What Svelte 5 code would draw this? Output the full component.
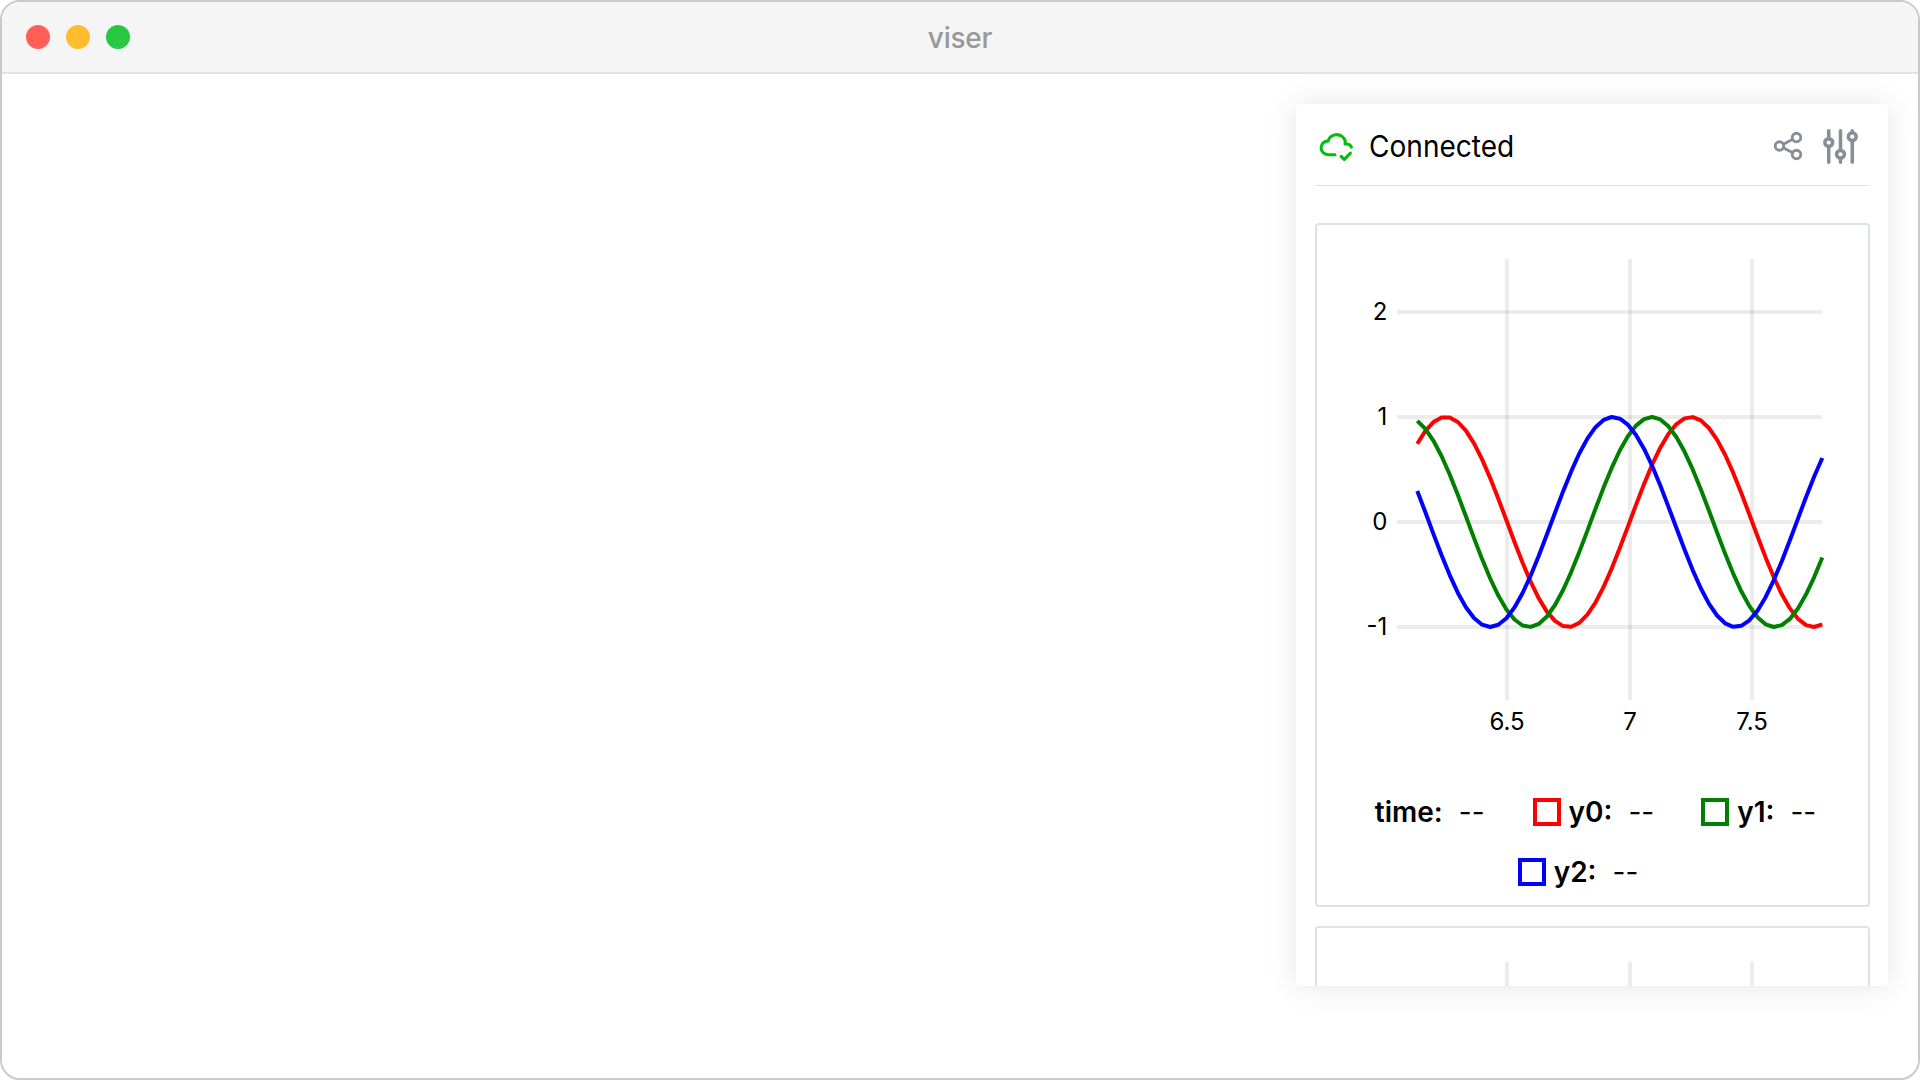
<script>
  // Chart geometry, in SVG user units (card interior is 551 wide)
  const xOf = (t) => 312.6 + (t - 7) * 245.2;
  const yOf = (v) => 297 - v * 105;

  const yTicks = [2, 1, 0, -1];
  const xTicks = [
    { label: '6.5', x: 190 },
    { label: '7', x: 313 },
    { label: '7.5', x: 435 }
  ];

  const series = [
    { name: 'y0', color: '#ff0000', phase: 0 },
    { name: 'y1', color: '#008000', phase: 1 },
    { name: 'y2', color: '#0000ff', phase: 2 }
  ];

  const start = 6.134;
  const step = 0.03304;
  const count = 50;

  function trace(phase) {
    const pts = [];
    for (let i = 0; i <= count; i++) {
      const t = start + i * step;
      const v = Math.sin(2 * Math.PI * t + phase);
      pts.push(`${xOf(t).toFixed(1)},${yOf(v).toFixed(1)}`);
    }
    return pts.join(' ');
  }
</script>

{#snippet grid()}
  <g class="grid">
    {#each xTicks as tick}
      <rect x={tick.x - 2} y="34" width="4" height="441" />
    {/each}
    {#each yTicks as v}
      <rect x="80" y={yOf(v) - 2} width="425" height="4" />
    {/each}
  </g>
{/snippet}

<div class="window">
  <header class="titlebar">
    <div class="lights">
      <span class="light close"></span>
      <span class="light minimize"></span>
      <span class="light zoom"></span>
    </div>
    <div class="title">viser</div>
    <div class="spacer"></div>
  </header>

  <main class="viewport">
    <aside class="panel">
      <div class="status">
        <svg class="cloud" viewBox="0 0 24 24">
          <path d="M11 18.004h-4.343c-2.572 -.004 -4.657 -2.011 -4.657 -4.487c0 -2.475 2.085 -4.482 4.657 -4.482c.393 -1.762 1.794 -3.2 3.675 -3.773c1.88 -.572 3.956 -.193 5.444 1c1.488 1.19 2.162 3.007 1.77 4.769h.99c1.388 0 2.585 .82 3.138 2.007" />
          <path d="M15 19l2 2l4 -4" />
        </svg>
        <span class="label">Connected</span>
        <svg class="share" viewBox="0 0 24 24">
          <circle cx="6" cy="12" r="3" />
          <circle cx="18" cy="6" r="3" />
          <circle cx="18" cy="18" r="3" />
          <path d="M8.7 10.7l6.6 -3.4M8.7 13.3l6.6 3.4" />
        </svg>
        <svg class="adjust" viewBox="0 0 24 24">
          <circle cx="6" cy="10" r="2" />
          <circle cx="12" cy="16" r="2" />
          <circle cx="18" cy="7" r="2" />
          <path d="M6 4v4M6 12v8M12 4v10M12 18v2M18 4v1M18 9v11" />
        </svg>
      </div>

      <section class="card">
        <svg width="551" height="540" viewBox="0 0 551 540">
          {@render grid()}
          {#each yTicks as v}
            <text class="tick" x="70.3" y={yOf(v) + 8} text-anchor="end">{v}</text>
          {/each}
          {#each xTicks as tick}
            <text class="tick" x={tick.x} y="505" text-anchor="middle">{tick.label}</text>
          {/each}
          {#each series as s}
            <polyline points={trace(s.phase)} fill="none" stroke={s.color} stroke-width="4" stroke-linejoin="round" />
          {/each}
        </svg>
        <div class="legend">
          <div class="item"><b>time:</b><span class="value">--</span></div>
          {#each series as s}
            <div class="item item-{s.name}">
              <span class="swatch {s.name}"></span><b>{s.name}:</b><span class="value">--</span>
            </div>
          {/each}
        </div>
      </section>

      <section class="card">
        <svg width="551" height="540" viewBox="0 0 551 540">
          {@render grid()}
        </svg>
      </section>
    </aside>
  </main>
</div>

<style>
  :global(body) {
    margin: 0;
    background: #fff;
  }
  .window {
    box-sizing: border-box;
    width: 1920px;
    height: 1080px;
    border: 2px solid #cacaca;
    border-radius: 20px;
    background: #fff;
    overflow: hidden;
    display: flex;
    flex-direction: column;
    font-family: Inter, 'Liberation Sans', sans-serif;
    color: #000;
  }
  .titlebar {
    box-sizing: border-box;
    flex: none;
    height: 72px;
    border-bottom: 2px solid #e2e2e2;
    background: #f5f5f5;
    display: grid;
    grid-template-columns: 1fr auto 1fr;
    align-items: center;
  }
  .lights {
    display: flex;
    gap: 16px;
    padding-left: 24px;
  }
  .light {
    width: 24px;
    height: 24px;
    border-radius: 50%;
  }
  .close { background: #ff5f57; }
  .minimize { background: #febc2e; }
  .zoom { background: #28c840; }
  .title {
    padding-top: 2px;
    font-size: 28px;
    line-height: 34px;
    font-weight: 500;
    letter-spacing: -0.2px;
    color: #999;
  }
  .viewport {
    flex: 1;
    min-height: 0;
    display: flex;
    justify-content: flex-end;
    align-items: flex-start;
    padding: 30px 30px 0 0;
  }
  .panel {
    box-sizing: border-box;
    width: 592px;
    height: 882px;
    padding: 0 18px 0 19px;
    border-radius: 4px;
    background: #fff;
    box-shadow: 0 0 32px rgba(0, 0, 0, 0.1), 0 2px 6px rgba(0, 0, 0, 0.01);
    overflow: hidden;
  }
  .status {
    box-sizing: border-box;
    display: flex;
    align-items: center;
    height: 82px;
    padding: 3px 6px 0 3px;
    border-bottom: 1px solid #dee2e6;
    margin-bottom: 37px;
  }
  svg {
    display: block;
    flex: none;
  }
  .cloud, .share, .adjust {
    fill: none;
    stroke-width: 2;
    stroke-linecap: round;
    stroke-linejoin: round;
  }
  .cloud {
    width: 37px;
    height: 37px;
    margin-top: -2px;
    stroke: #00bf0b;
  }
  .share, .adjust { stroke: #868e96; }
  .share {
    width: 34px;
    height: 34px;
    margin-right: 12px;
  }
  .adjust {
    width: 47px;
    height: 47px;
    stroke-width: 1.8;
  }
  .label {
    flex: 1;
    padding-left: 14px;
    font-size: 30px;
    line-height: 40px;
    transform: scaleX(0.935);
    transform-origin: 14px 50%;
  }
  .card {
    box-sizing: border-box;
    height: 684px;
    border: 2px solid #dee2e6;
    border-radius: 4px;
    margin-bottom: 19px;
  }
  .grid { fill: rgba(0, 0, 0, 0.075); }
  .tick {
    font-size: 24px;
    fill: #000;
  }
  .legend {
    display: flex;
    flex-wrap: wrap;
    justify-content: center;
    column-gap: 48px;
    padding: 17px 27px 0 33px;
  }
  .item {
    display: flex;
    align-items: center;
    height: 60px;
    font-size: 28px;
  }
  .item b { font-weight: 600; }
  .value { padding-left: 16px; }
  .item-y1 { margin-left: -1px; }
  .item-y2 { margin-right: 35px; }
  .swatch {
    box-sizing: border-box;
    width: 28px;
    height: 28px;
    margin-right: 8px;
    border: 4px solid;
  }
  .y0 { border-color: #ff0000; }
  .y1 { border-color: #008000; }
  .y2 { border-color: #0000ff; }
</style>
